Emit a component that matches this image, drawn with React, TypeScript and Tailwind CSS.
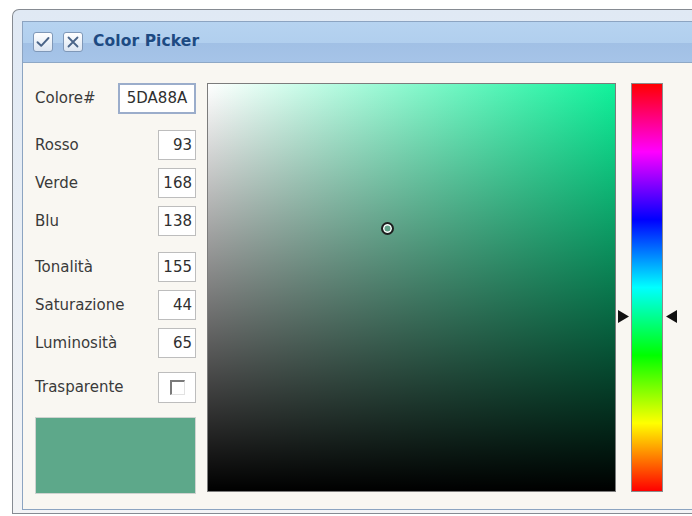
import React from "react";

type Field = { label: string; value: string; gap: string };

// RGB and HSB fields, in display order
const fields: Field[] = [
  { label: "Rosso", value: "93", gap: "mt-[16px]" },
  { label: "Verde", value: "168", gap: "mt-[8px]" },
  { label: "Blu", value: "138", gap: "mt-[8px]" },
  { label: "Tonalità", value: "155", gap: "mt-[16px]" },
  { label: "Saturazione", value: "44", gap: "mt-[8px]" },
  { label: "Luminosità", value: "65", gap: "mt-[8px]" },
];

const HeaderButton = ({ kind }: { kind: "ok" | "cancel" }) => (
  <div className="w-[20px] h-[20px] rounded-[3px] border border-[#7f98b8] bg-[linear-gradient(to_bottom,#ffffff,#dbe5f2)] flex items-center justify-center">
    <svg width="16" height="16" viewBox="0 0 16 16" fill="none">
      {kind === "ok" ? (
        <path d="M2.5 8.2 L6.2 11.8 L13.5 4" stroke="#4a6488" strokeWidth="1.9" strokeLinecap="round" strokeLinejoin="round" />
      ) : (
        <path d="M3.5 3.5 L12.5 12.5 M12.5 3.5 L3.5 12.5" stroke="#4a6488" strokeWidth="1.8" strokeLinecap="round" />
      )}
    </svg>
  </div>
);

const NumberBox = ({ value }: { value: string }) => (
  <div className="w-[38px] h-[30px] border border-[#bdbdbd] bg-white flex items-center justify-end pr-[3px] text-[15px] text-[#2f2f2f]">
    {value}
  </div>
);

export default function App() {
  return (
    <div className="w-[692px] h-[516px] overflow-hidden bg-white pt-[9px] pl-[12px] font-['DejaVu_Sans',sans-serif]">
      <div className="h-[505px] rounded-tl-[7px] border-t border-l border-b border-[#868b92] bg-[linear-gradient(to_bottom,#e0e9f4,#f3f4f6)] pl-[9px] pt-[11px] pb-[3px] flex flex-col">
        <div className="flex-1 flex flex-col border-t border-l border-b border-[#8ca4c1]">
          {/* title bar */}
          <div className="h-[41px] border-b border-[#8ea8c6] bg-[linear-gradient(to_bottom,#b6d3f0_0%,#b1cfee_52%,#a1c0e5_53%,#a6c4e8_100%)] flex items-center pl-[10px] gap-[10px]">
            <HeaderButton kind="ok" />
            <HeaderButton kind="cancel" />
            <span className="text-[15.5px] font-bold text-[#1d4a82] tracking-[0.1px]">Color Picker</span>
          </div>

          <div className="flex-1 bg-[#f9f7f2] flex pl-[12px] pt-[20px]">
            {/* fields column */}
            <div className="w-[161px] flex flex-col text-[15px] text-[#3a3a3a]">
              <div className="h-[31px] flex items-center justify-between">
                <span>Colore#</span>
                <div className="w-[78px] h-[31px] border-2 border-[#9badcb] bg-white flex items-center justify-center text-[#2f2f2f]">
                  5DA88A
                </div>
              </div>
              {fields.map((f) => (
                <div key={f.label} className={`h-[30px] flex items-center justify-between ${f.gap}`}>
                  <span>{f.label}</span>
                  <NumberBox value={f.value} />
                </div>
              ))}
              <div className="h-[31px] mt-[14px] flex items-center justify-between">
                <span>Trasparente</span>
                <div className="w-[38px] h-[31px] border border-[#bdbdbd] bg-white flex items-center justify-center">
                  <div className="w-[15px] h-[15px] border-t-2 border-l-2 border-t-[#7a7a7a] border-l-[#7a7a7a] border-r border-b border-r-[#e2e2e2] border-b-[#e2e2e2] bg-white" />
                </div>
              </div>
              <div className="h-[77px] mt-[14px] bg-[#5da88a] border border-[#cfd3d0]" />
            </div>

            {/* saturation / brightness square */}
            <div className="relative ml-[11px] w-[409px] h-[409px] border border-[#7c7c7c] bg-[linear-gradient(to_top,#000000,transparent),linear-gradient(to_right,#ffffff,#10f29b)]">
              <div className="absolute left-[173px] top-[138px] w-[13px] h-[13px] rounded-full border-2 border-[#1e1e1e] shadow-[inset_0_0_0_1.5px_#ffffff]" />
            </div>

            {/* hue strip */}
            <div className="relative ml-[15px] w-[32px] h-[409px] border border-[#8c8c8c] bg-[linear-gradient(to_bottom,#ff0000_0%,#ff00ff_16.67%,#0000ff_33.33%,#00ffff_50%,#00ff00_66.67%,#ffff00_83.33%,#ff0000_100%)]">
              <svg className="absolute left-[-14px] top-[226px]" width="11" height="13" viewBox="0 0 11 13">
                <path d="M0 0 L11 6.5 L0 13 Z" fill="#111" />
              </svg>
              <svg className="absolute right-[-15px] top-[226px]" width="11" height="13" viewBox="0 0 11 13">
                <path d="M11 0 L0 6.5 L11 13 Z" fill="#111" />
              </svg>
            </div>
          </div>
        </div>
      </div>
    </div>
  );
}
